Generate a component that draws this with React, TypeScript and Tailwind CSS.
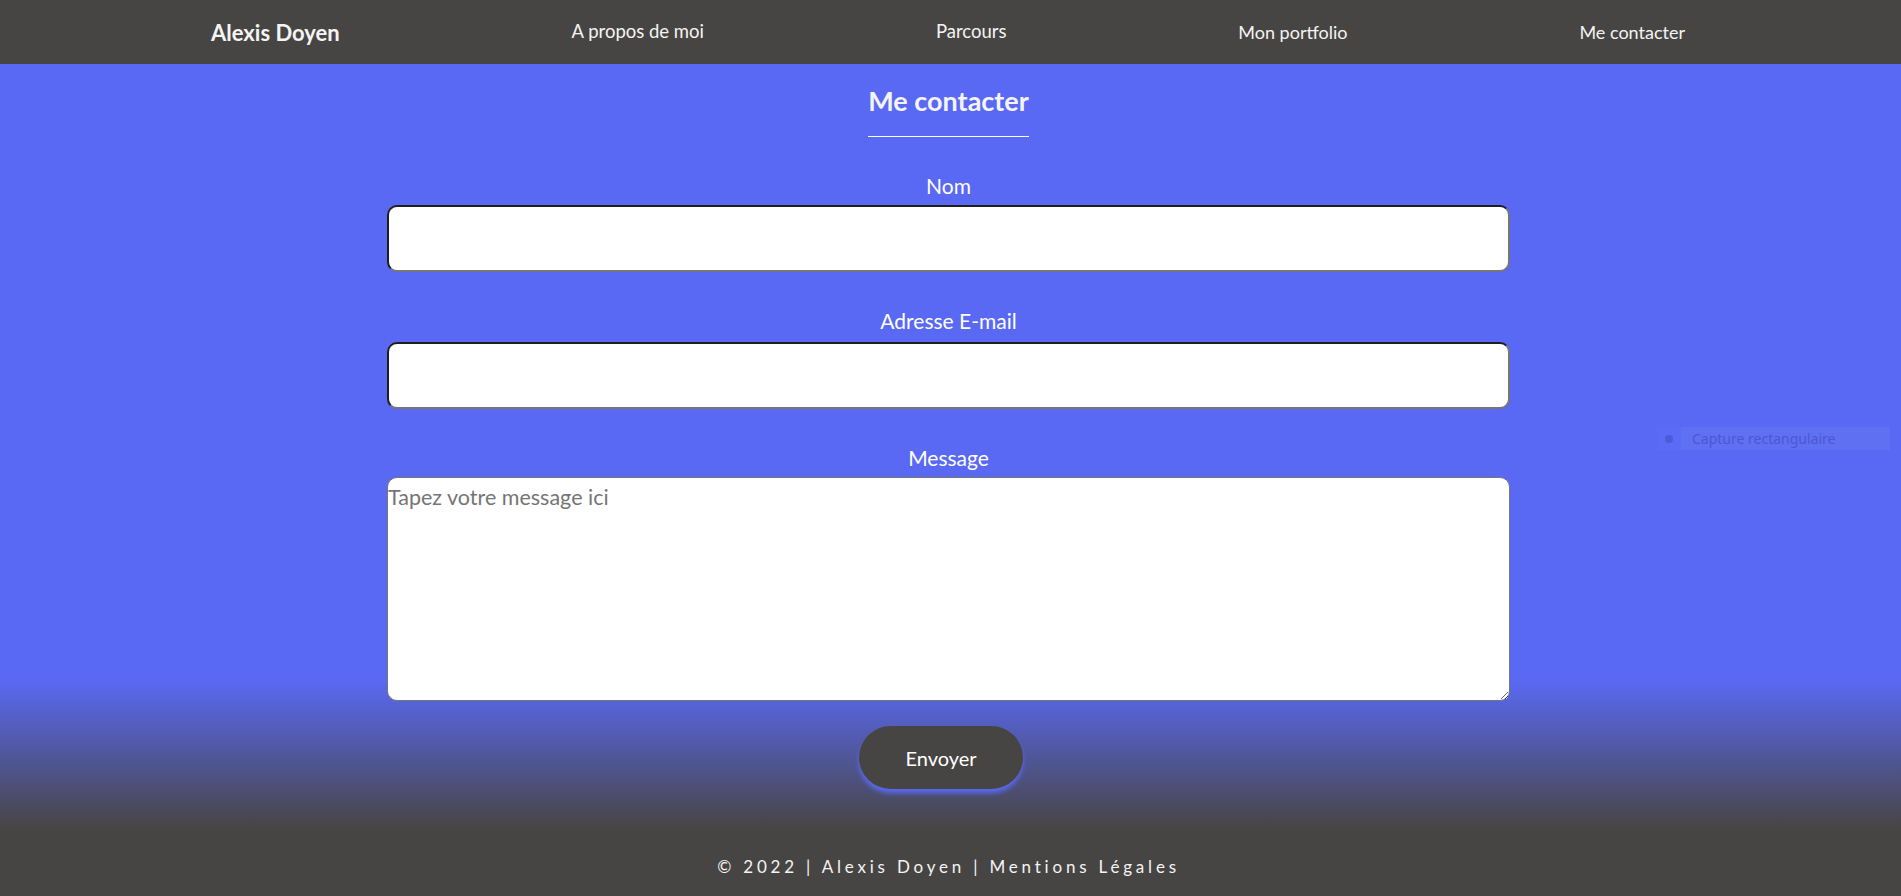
import React from "react";

export default function App() {
  return (
    <div className="relative min-h-[896px] w-full bg-[linear-gradient(to_bottom,#5969f3_680px,#474543_830px)] font-['Lato','Noto_Sans',sans-serif] text-white">
      <nav className="flex h-16 items-center justify-between bg-[#474543] pl-[211px] pr-[216px]">
        <a className="text-[22px] font-bold text-[#f4f4f4]">Alexis Doyen</a>
        <a className="text-[18.5px] text-[#f4f4f4]">A propos de moi</a>
        <a className="text-[18.5px] text-[#f4f4f4]">Parcours</a>
        <a className="text-[18px] text-[#f4f4f4]">Mon portfolio</a>
        <a className="text-[18px] text-[#f4f4f4]">Me contacter</a>
      </nav>

      <main className="flex flex-col items-center pr-[4px]">
        <h2 className="mt-5 inline-block border-b border-white pb-[18px] text-[27px] font-bold leading-[34px] text-[#f4f4f4]">
          Me contacter
        </h2>

        <form className="mt-[37px] flex w-[1123px] flex-col items-center">
          <label className="mb-[7px] h-6 text-[21px] leading-6">Nom</label>
          <input
            type="text"
            className="mb-[37px] h-[67px] w-full rounded-[10px] border-2 border-t-[#1e1e1e] border-l-[#1e1e1e] border-b-[#767676] border-r-[#767676] bg-white text-black outline-none"
          />
          <label className="mb-[9px] h-6 text-[21px] leading-6">Adresse E-mail</label>
          <input
            type="email"
            className="mb-[37px] h-[67px] w-full rounded-[10px] border-2 border-t-[#1e1e1e] border-l-[#1e1e1e] border-b-[#767676] border-r-[#767676] bg-white text-black outline-none"
          />
          <label className="mb-[7px] h-6 text-[21px] leading-6">Message</label>
          <textarea
            placeholder="Tapez votre message ici"
            className="h-[224px] w-full rounded-[10px] border border-[#767676] bg-white p-0 pt-[4px] text-[21.5px] leading-[30px] text-black outline-none placeholder:text-[#757575]"
          />
          <button
            type="button"
            className="mr-[15px] mt-[25px] h-[63px] w-[164px] rounded-full bg-[#474543] text-[20px] text-white shadow-[0_4px_5px_#5b6af5]"
          >
            Envoyer
          </button>
        </form>

        <footer className="mt-[68px] pb-[21px] text-[17px] leading-5 tracking-[3.8px] text-[#f4f4f4]">
          © 2022 | Alexis Doyen | Mentions Légales
        </footer>
      </main>

      <div className="absolute left-[1657px] top-[427px] flex h-[23px] w-[233px] items-center bg-[#5f70f3] font-['Noto_Sans',sans-serif]">
        <div className="flex h-full w-6 items-center justify-center bg-[#5a6bf5]">
          <span className="h-2 w-2 rounded-full bg-[#4d5bd8]" />
        </div>
        <span className="ml-[11px] text-[14px] text-[#4c57d2]">Capture rectangulaire</span>
      </div>
    </div>
  );
}
